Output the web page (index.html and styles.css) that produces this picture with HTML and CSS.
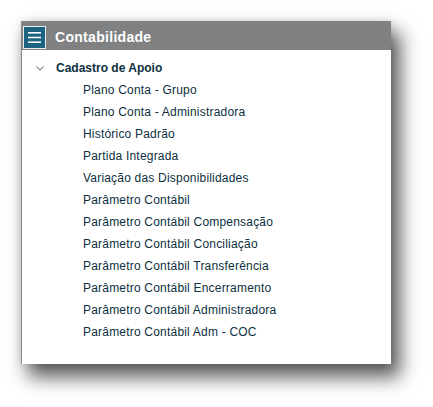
FILE: index.html
```html
<!DOCTYPE html>
<html lang="pt-BR">
<head>
<meta charset="utf-8">
<title>Contabilidade</title>
<link rel="stylesheet" href="styles.css">
</head>
<body>
	<div class="panel">
		<div class="panel_head">
			<span class="menu_icon">
				<svg width="13" height="11" viewBox="0 0 13 11">
					<rect x="0" y="0" width="13" height="1.6" fill="#fff"/>
					<rect x="0" y="4.7" width="13" height="1.6" fill="#fff"/>
					<rect x="0" y="9.4" width="13" height="1.6" fill="#fff"/>
				</svg>
			</span>
			<span class="panel_title">Contabilidade</span>
		</div>

		<div class="group">
			<span class="chevron">
				<svg width="8" height="5" viewBox="0 0 8 5">
					<polyline points="0.5,0.5 4,4 7.5,0.5" fill="none" stroke="#8c8c8c" stroke-width="1.1"/>
				</svg>
			</span>
			<span class="group_title">Cadastro de Apoio</span>
		</div>

		<ul class="items">
			<li>Plano Conta - Grupo</li>
			<li>Plano Conta - Administradora</li>
			<li>Histórico Padrão</li>
			<li>Partida Integrada</li>
			<li>Variação das Disponibilidades</li>
			<li>Parâmetro Contábil</li>
			<li>Parâmetro Contábil Compensação</li>
			<li>Parâmetro Contábil Conciliação</li>
			<li>Parâmetro Contábil Transferência</li>
			<li>Parâmetro Contábil Encerramento</li>
			<li>Parâmetro Contábil Administradora</li>
			<li>Parâmetro Contábil Adm - COC</li>
		</ul>
	</div>
</body>
</html>
```

FILE: styles.css
```css
* {
	box-sizing: border-box;
}

html {
	background-color: #ffffff;
}

body {
	margin: 0;
	padding: 21px 0 43px 21px;
	min-height: 407px;
	font-family: "Liberation Sans", Arial, sans-serif;
}

.panel {
	width: 370px;
	height: 343px;
	background-color: #ffffff;
	border-left: 1px solid #8a8a8a;
	box-shadow: 8px 12px 18px 1px rgba(0, 0, 0, 0.65), 0 0 8px rgba(0, 0, 0, 0.12);
}

.panel_head {
	display: flex;
	align-items: flex-start;
	height: 29px;
	padding: 5px 0 0 1px;
	background-color: #808182;
}

.menu_icon {
	display: flex;
	align-items: center;
	justify-content: center;
	width: 23px;
	height: 23px;
	background-color: #1c6382;
	border: 1px solid #e8eef0;
}

.panel_title {
	margin: 3px 0 0 9px;
	color: #ffffff;
	font-size: 14px;
	font-weight: bold;
	letter-spacing: 0.3px;
}

.group {
	display: flex;
	align-items: center;
	height: 22px;
	margin-top: 7px;
}

.chevron {
	display: flex;
	width: 34px;
	padding-left: 14px;
}

.group_title {
	color: #0d2f40;
	font-size: 12px;
	font-weight: bold;
}

.items {
	list-style: none;
	margin: 0;
	padding: 0 0 0 61px;
}

.items li {
	height: 22px;
	line-height: 22px;
	color: #0d2f40;
	font-size: 12px;
	letter-spacing: 0.2px;
}
```
